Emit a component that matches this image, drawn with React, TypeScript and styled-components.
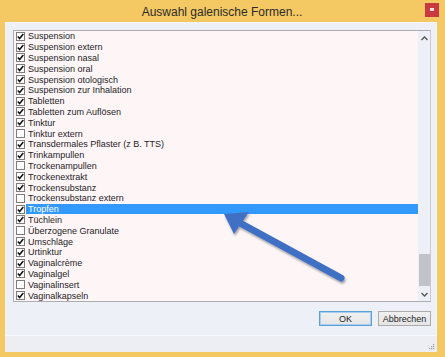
import React from "react";
import styled, { createGlobalStyle } from "styled-components";

const GlobalStyle = createGlobalStyle`
  html, body { margin: 0; padding: 0; background: #f4c862; }
  body { font-family: "Liberation Sans", Arial, sans-serif; }
`;

const Window = styled.div`
  position: relative;
  width: 445px;
  height: 357px;
  background: #f4c862;
  display: flex;
  flex-direction: column;
  overflow: hidden;
`;

const TitleBar = styled.div`
  height: 22px;
  display: grid;
  grid-template-columns: 1fr auto 1fr;
  align-items: center;
  padding: 0 6px 0 5px;
`;

const Title = styled.div`
  grid-column: 2;
  font-family: "Liberation Sans", Arial, sans-serif;
  font-size: 12px;
  color: #2b2b2b;
  padding-top: 1px;
`;

const CloseButton = styled.div`
  grid-column: 3;
  justify-self: end;
  width: 14px;
  height: 14px;
  margin-top: -3px;
  background: #c9393f;
  display: flex;
  align-items: center;
  justify-content: center;
  &::after {
    content: "";
    width: 4px;
    height: 3px;
    background: #f6e2e2;
  }
`;

const Client = styled.div`
  flex: 1;
  margin: 0 8px 5px 5px;
  background: #eef0f7;
  display: flex;
  flex-direction: column;
  box-shadow: inset 0 0 0 1px #f5f6fa;
`;

const Body = styled.div`
  height: 313px;
  box-sizing: border-box;
  padding: 8px 6px 9px 8px;
  display: flex;
  flex-direction: column;
`;

const ListBox = styled.div`
  height: 272px;
  box-sizing: border-box;
  border: 1px solid #abadb3;
  border-right-color: #c9cbd0;
  background: #fdf5f6;
  display: flex;
`;

const Items = styled.div`
  flex: 1;
  display: grid;
  grid-auto-rows: 10.8px;
  padding-left: 2px;
`;

const Row = styled.div`
  display: flex;
  align-items: center;
`;

const Box = styled.div`
  width: 9px;
  height: 9px;
  box-sizing: border-box;
  border: 1px solid #7d7d7d;
  background: #fff;
  margin-right: 1px;
  display: flex;
  align-items: center;
  justify-content: center;
  flex-shrink: 0;
`;

const Label = styled.div<{ $selected?: boolean }>`
  flex: 1;
  height: 10px;
  line-height: 10px;
  padding-left: 2px;
  font-size: 9px;
  color: ${(p) => (p.$selected ? "#ffffff" : "#1e1e28")};
  background: ${(p) => (p.$selected ? "#3399ff" : "transparent")};
  white-space: nowrap;
`;

const ScrollBar = styled.div`
  width: 12px;
  background: #eef0f7;
  display: flex;
  flex-direction: column;
  align-items: center;
`;

const ArrowBtn = styled.div`
  height: 14px;
  width: 12px;
  display: flex;
  align-items: center;
  justify-content: center;
`;

const Track = styled.div`
  flex: 1;
  width: 11px;
  display: flex;
  flex-direction: column;
  justify-content: flex-end;
`;

const Thumb = styled.div`
  height: 32px;
  background: #c2c3c9;
  margin-bottom: 1px;
`;

const ButtonRow = styled.div`
  display: flex;
  justify-content: flex-end;
  gap: 6px;
  margin-top: 9px;
`;

const Button = styled.button<{ $default?: boolean }>`
  width: 53px;
  height: 15px;
  padding: 0;
  box-sizing: border-box;
  border: 1px solid ${(p) => (p.$default ? "#5a9fd8" : "#acacac")};
  box-shadow: ${(p) => (p.$default ? "inset 0 0 0 1px #a9cdee" : "none")};
  background: linear-gradient(#f0f0f0, #e5e5e5);
  font-family: "Liberation Sans", Arial, sans-serif;
  font-size: 9px;
  color: #1e1e1e;
`;

const StatusStrip = styled.div`
  flex: 1;
  border-top: 1px solid #f7f8fb;
  background: #eceef4;
  display: flex;
  justify-content: flex-end;
  align-items: flex-end;
  padding: 0 2px 2px 0;
`;

const Overlay = styled.svg`
  position: absolute;
  left: 0;
  top: 0;
  pointer-events: none;
`;

const items: [string, boolean][] = [
  ["Suspension", true],
  ["Suspension extern", true],
  ["Suspension nasal", true],
  ["Suspension oral", true],
  ["Suspension otologisch", true],
  ["Suspension zur Inhalation", true],
  ["Tabletten", true],
  ["Tabletten zum Auflösen", true],
  ["Tinktur", true],
  ["Tinktur extern", false],
  ["Transdermales Pflaster (z B. TTS)", true],
  ["Trinkampullen", true],
  ["Trockenampullen", false],
  ["Trockenextrakt", true],
  ["Trockensubstanz", true],
  ["Trockensubstanz extern", false],
  ["Tropfen", true],
  ["Tüchlein", true],
  ["Überzogene Granulate", false],
  ["Umschläge", true],
  ["Urtinktur", true],
  ["Vaginalcrème", true],
  ["Vaginalgel", true],
  ["Vaginalinsert", false],
  ["Vaginalkapseln", true],
];

const Check = () => (
  <svg width="7" height="7" viewBox="0 0 7 7">
    <path d="M0.8 3.6 L2.6 5.5 L6.3 1" stroke="#111" strokeWidth="1.5" fill="none" />
  </svg>
);

export default function App() {
  return (
    <>
      <GlobalStyle />
      <Window>
        <TitleBar>
          <Title>Auswahl galenische Formen...</Title>
          <CloseButton />
        </TitleBar>
        <Client>
          <Body>
            <ListBox>
              <Items>
                {items.map(([name, checked]) => (
                  <Row key={name}>
                    <Box>{checked && <Check />}</Box>
                    <Label $selected={name === "Tropfen"}>{name}</Label>
                  </Row>
                ))}
              </Items>
              <ScrollBar>
                <ArrowBtn>
                  <svg width="7" height="5" viewBox="0 0 7 5">
                    <path d="M0.5 4 L3.5 1 L6.5 4" stroke="#555" strokeWidth="1.3" fill="none" />
                  </svg>
                </ArrowBtn>
                <Track>
                  <Thumb />
                </Track>
                <ArrowBtn>
                  <svg width="7" height="5" viewBox="0 0 7 5">
                    <path d="M0.5 1 L3.5 4 L6.5 1" stroke="#555" strokeWidth="1.3" fill="none" />
                  </svg>
                </ArrowBtn>
              </ScrollBar>
            </ListBox>
            <ButtonRow>
              <Button $default>OK</Button>
              <Button>Abbrechen</Button>
            </ButtonRow>
          </Body>
          <StatusStrip>
            <svg width="7" height="7" viewBox="0 0 7 7">
              <rect x="5" y="1" width="1.2" height="1.2" fill="#9a9ca3" />
              <rect x="3" y="3" width="1.2" height="1.2" fill="#9a9ca3" />
              <rect x="5" y="3" width="1.2" height="1.2" fill="#9a9ca3" />
              <rect x="1" y="5" width="1.2" height="1.2" fill="#9a9ca3" />
              <rect x="3" y="5" width="1.2" height="1.2" fill="#9a9ca3" />
              <rect x="5" y="5" width="1.2" height="1.2" fill="#9a9ca3" />
            </svg>
          </StatusStrip>
        </Client>
        <Overlay width="445" height="357" viewBox="0 0 445 357">
          <defs>
            <filter id="sh" x="-20%" y="-20%" width="140%" height="140%">
              <feDropShadow dx="1" dy="2" stdDeviation="1.2" floodColor="#000" floodOpacity="0.35" />
            </filter>
          </defs>
          <g filter="url(#sh)">
            <line x1="341" y1="278" x2="240" y2="223" stroke="#3f6fc4" strokeWidth="7" strokeLinecap="round" />
            <polygon points="224,214 249,212 234,234" fill="#3f6fc4" />
          </g>
        </Overlay>
      </Window>
    </>
  );
}
